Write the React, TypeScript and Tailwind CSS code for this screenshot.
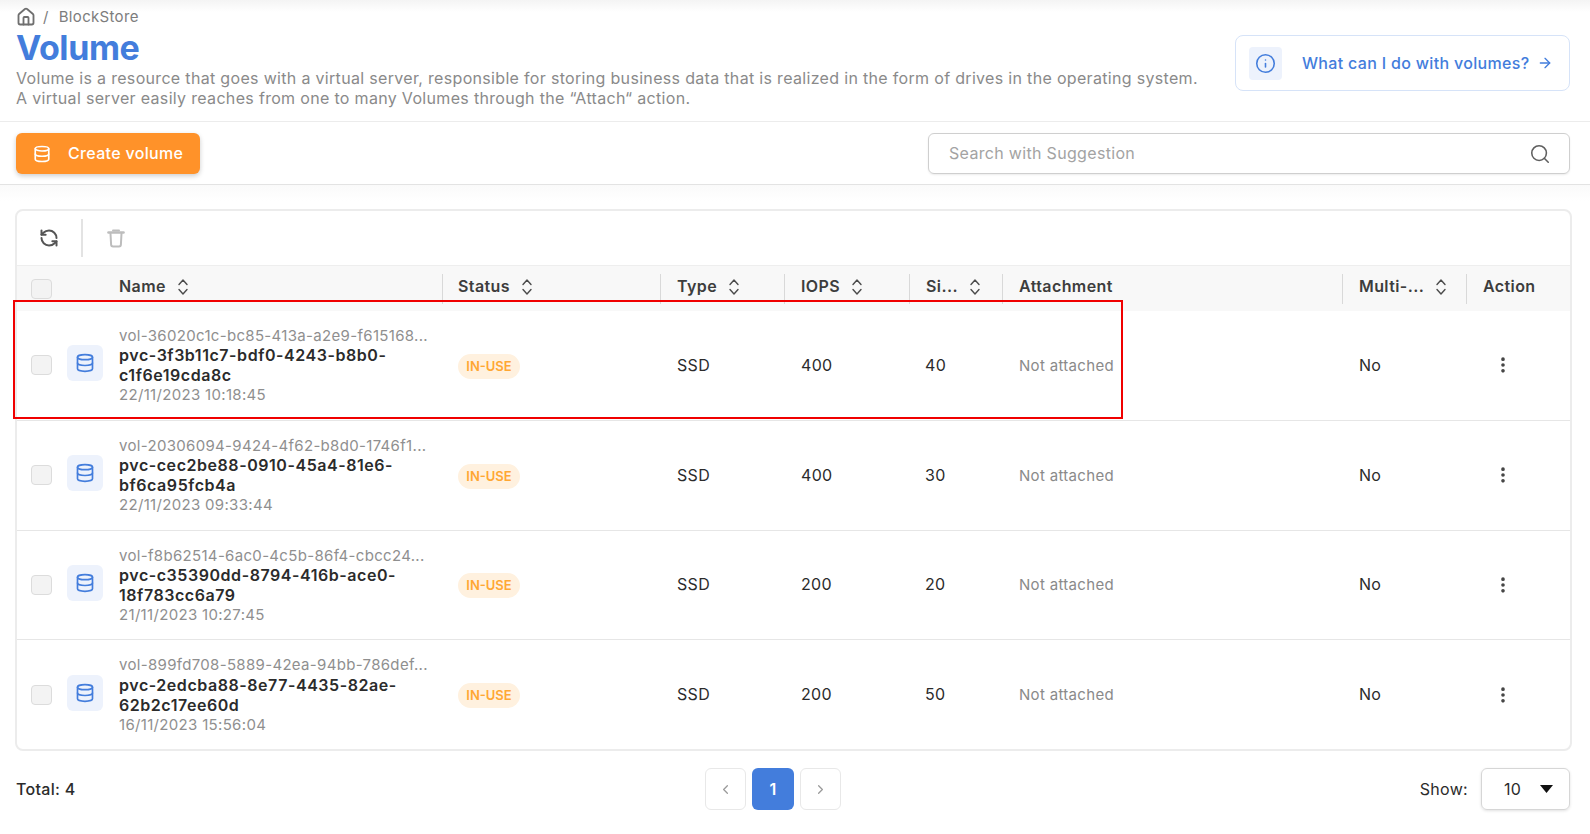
import { ArrowRight, Database, EllipsisVertical, Home, Info, RefreshCcw, Search, ChevronLeft, ChevronRight } from 'lucide-react';

interface VolumeRow {
  id: string;
  name: string[];
  createdAt: string;
  iops: number;
  size: number;
}

const volumes: VolumeRow[] = [
  { id: 'vol-36020c1c-bc85-413a-a2e9-f615168...', name: ['pvc-3f3b11c7-bdf0-4243-b8b0-', 'c1f6e19cda8c'], createdAt: '22/11/2023 10:18:45', iops: 400, size: 40 },
  { id: 'vol-20306094-9424-4f62-b8d0-1746f1...', name: ['pvc-cec2be88-0910-45a4-81e6-', 'bf6ca95fcb4a'], createdAt: '22/11/2023 09:33:44', iops: 400, size: 30 },
  { id: 'vol-f8b62514-6ac0-4c5b-86f4-cbcc24...', name: ['pvc-c35390dd-8794-416b-ace0-', '18f783cc6a79'], createdAt: '21/11/2023 10:27:45', iops: 200, size: 20 },
  { id: 'vol-899fd708-5889-42ea-94bb-786def...', name: ['pvc-2edcba88-8e77-4435-82ae-', '62b2c17ee60d'], createdAt: '16/11/2023 15:56:04', iops: 200, size: 50 },
];

const gridCols = 'grid grid-cols-[85px_340px_218px_124px_125px_93px_340px_124px_1fr]';

function SortIcon() {
  return (
    <svg width="12" height="18" viewBox="0 0 12 18" fill="none" stroke="#4b4b4b" strokeWidth="1.4" strokeLinecap="round" strokeLinejoin="round">
      <path d="M2 6.5 6 2l4 4.5" />
      <path d="M2 11.5 6 16l4-4.5" />
    </svg>
  );
}

function HeaderCell({ label, sort = true, first = false, pad = 'pl-4' }: { label: string; sort?: boolean; first?: boolean; pad?: string }) {
  return (
    <div className="pt-2">
      <div className={`flex h-[30px] w-full items-start gap-[11px] ${first ? 'pl-[17px]' : `border-l border-[#d9d9d9] ${pad}`}`}>
        <span className="font-semibold leading-[25px] tracking-[0.4px] text-[#3d3d3d]">{label}</span>
        {sort && <span className="pt-1"><SortIcon /></span>}
      </div>
    </div>
  );
}

export default function App() {
  return (
    <div className="relative h-[834px] w-[1590px] overflow-hidden bg-white font-['Inter',sans-serif] text-base tracking-[0.32px] text-[#2b2b2b]">
      {/* page header */}
      <div className="flex h-[122px] items-start justify-between border-b border-[#ececec] bg-gradient-to-b from-[#f4f4f4] to-white to-[12px] pl-4 pr-5">
        <div>
          <div className="flex h-[31px] items-center gap-[7px] pt-[3px] text-[15px] text-[#7d7d7d]">
            <Home size={20} color="#6f6f6f" strokeWidth={2.2} />
            <span>/</span>
            <span className="ml-[3px]">BlockStore</span>
          </div>
          <h1 className="text-[34px] font-bold leading-[33px] tracking-[-0.4px] text-[#437ddc]">Volume</h1>
          <p className="mt-[4px] leading-[20px] text-[#8a8a8a]">
            Volume is a resource that goes with a virtual server, responsible for storing business data that is realized in the form of drives in the operating system.
            <br />
            A virtual server easily reaches from one to many Volumes through the “Attach“ action.
          </p>
        </div>
        <div className="mt-[35px] flex h-[56px] w-[335px] items-center gap-5 rounded-lg border border-[#d6e3f8] pl-[13px] text-[#437ddc]">
          <div className="flex h-[33px] w-[33px] items-center justify-center rounded bg-[#edf2fc]">
            <Info size={21} strokeWidth={1.8} />
          </div>
          <span className="font-medium">What can I do with volumes?</span>
          <ArrowRight size={16} className="-ml-3" />
        </div>
      </div>

      {/* action bar */}
      <div className="flex h-[63px] items-center justify-between border-b border-[#e3e3e3] pl-4 pr-5 pt-px">
        <button type="button" className="flex h-[41px] w-[184px] items-center gap-[17px] rounded-md bg-[#ff9229] pl-[17px] font-medium text-white shadow-[0_2px_5px_rgba(0,0,0,0.2)]">
          <Database size={18} strokeWidth={2.2} />
          <span className="-mt-px">Create volume</span>
        </button>
        <div className="flex h-[41px] w-[642px] items-center justify-between rounded-md border border-[#cfcfcf] pl-[20px] pr-[18px] shadow-[0_1px_2px_rgba(0,0,0,0.08)]">
          <span className="-mt-px text-[#a3a3a3]">Search with Suggestion</span>
          <Search size={22} color="#5f5f5f" strokeWidth={1.7} />
        </div>
      </div>

      {/* table card */}
      <div className="bg-gradient-to-b from-[#fafafa] to-white to-[16px] pl-[15px] pr-[18px] pt-[24px]">
        <div className="overflow-hidden rounded-lg border-2 border-[#ececec]">
          <div className="flex h-[54px] items-center">
            <div className="flex h-[38px] w-[66px] items-center justify-center border-r-2 border-[#e3e3e3]">
              <RefreshCcw size={20} color="#555555" strokeWidth={2.4} />
            </div>
            <div className="flex w-[66px] justify-center">
              <svg width="18" height="19" viewBox="0 0 18 19" fill="none" stroke="#bdbdbd" strokeWidth="2" strokeLinecap="round" strokeLinejoin="round">
                <path d="M6 1.5h6" strokeWidth="2" />
                <path d="M1.5 3.5h15" strokeWidth="2.6" />
                <path d="M3.5 4.5l.6 11a2 2 0 0 0 2 2h5.8a2 2 0 0 0 2-2l.6-11" />
              </svg>
            </div>
          </div>

          <div className={`${gridCols} h-[46px] border-t border-[#eeeeee] bg-[#f8f8f8]`}>
            <div className="pl-[14px] pt-[13px]">
              <div className="h-[20px] w-[21px] rounded border border-[#dcdcdc] bg-[#f3f3f3]" />
            </div>
            <HeaderCell label="Name" first />
            <HeaderCell label="Status" pad="pl-[15px]" />
            <HeaderCell label="Type" />
            <HeaderCell label="IOPS" />
            <HeaderCell label="Si..." />
            <HeaderCell label="Attachment" sort={false} />
            <HeaderCell label="Multi-..." />
            <HeaderCell label="Action" sort={false} />
          </div>

          {volumes.map((v, i) => (
            <div key={v.id} className={`${gridCols} items-center py-[15px] leading-[19.2px] ${i < volumes.length - 1 ? 'border-b border-[#e6e6e6]' : ''}`}>
              <div className="flex items-center gap-[15px] pl-[14px]">
                <div className="h-[20px] w-[21px] shrink-0 rounded border border-[#dcdcdc] bg-[#f3f3f3]" />
                <div className="-mt-1 flex h-[36px] w-[36px] shrink-0 items-center justify-center rounded-md bg-[#edf2fc]">
                  <Database size={20} color="#437ddc" strokeWidth={2} />
                </div>
              </div>
              <div className="pb-[0.4px] pl-[17px]">
                <div className="whitespace-nowrap text-[15px] text-[#8f8f8f]">{v.id}</div>
                <div className="font-semibold leading-[20px] tracking-[0.55px] text-[#2b2b2b]">{v.name[0]}</div>
                <div className="font-semibold leading-[20px] tracking-[0.55px] text-[#2b2b2b]">{v.name[1]}</div>
                <div className="text-[15px] text-[#8f8f8f]">{v.createdAt}</div>
              </div>
              <div className="pl-4 pt-0.5">
                <span className="inline-flex h-[25px] w-[62px] items-center justify-center rounded-full bg-[#fff1df] text-[13px] font-semibold tracking-normal text-[#ffa733]">IN-USE</span>
              </div>
              <div className="pl-[17px]">SSD</div>
              <div className="pl-[17px]">{v.iops}</div>
              <div className="pl-4">{v.size}</div>
              <div className="pl-[17px] text-[15px] text-[#8a8a8a]">Not attached</div>
              <div className="pl-[17px]">No</div>
              <div className="pl-[27px]">
                <EllipsisVertical size={20} color="#444444" strokeWidth={2.4} />
              </div>
            </div>
          ))}
        </div>
      </div>

      {/* footer */}
      <div className="relative mt-[17px] flex h-[42px] items-center justify-between pl-4 pr-5">
        <span className="font-medium">Total: 4</span>
        <div className="absolute left-[705px] top-0 flex gap-1.5">
          <div className="flex h-[42px] w-[41px] items-center justify-center rounded-md border border-[#e8e8e8] text-[#9a9a9a]">
            <ChevronLeft size={15} strokeWidth={2} />
          </div>
          <div className="flex h-[42px] w-[42px] items-center justify-center rounded-md bg-[#437ddc] font-semibold text-white">1</div>
          <div className="flex h-[42px] w-[41px] items-center justify-center rounded-md border border-[#e8e8e8] text-[#9a9a9a]">
            <ChevronRight size={15} strokeWidth={2} />
          </div>
        </div>
        <div className="flex items-center gap-[13px]">
          <span>Show:</span>
          <div className="flex h-[42px] w-[89px] items-center justify-between rounded-md border border-[#d6d6d6] pl-[22px] pr-[16px] shadow-[0_1px_3px_rgba(0,0,0,0.12)]">
            <span>10</span>
            <svg width="13" height="8" viewBox="0 0 13 8"><path d="M0 0h13L6.5 8z" fill="#111111" /></svg>
          </div>
        </div>
      </div>

      {/* red annotation around the first row */}
      <div className="pointer-events-none absolute left-[13px] top-[300px] h-[119px] w-[1110px] border-2 border-[#f00000]" />
    </div>
  );
}
